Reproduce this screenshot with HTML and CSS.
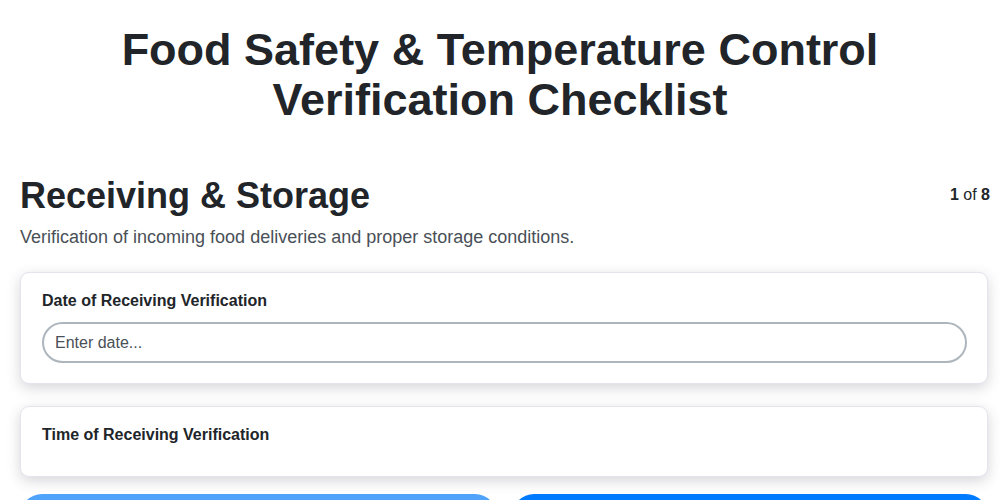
FILE: index.html
```html
<!DOCTYPE html>
<html lang="en">
<head>
<meta charset="utf-8">
<title>Food Safety &amp; Temperature Control Verification Checklist</title>
<link rel="stylesheet" href="styles.css">
</head>
<body>
<div class="page">
  <h1 class="title">Food Safety &amp; Temperature Control Verification Checklist</h1>
  <section class="section">
    <div class="section-head">
      <h2 class="section-title">Receiving &amp; Storage</h2>
      <div class="progress"><b>1</b> of <b>8</b></div>
    </div>
    <p class="section-desc">Verification of incoming food deliveries and proper storage conditions.</p>
    <div class="card">
      <label class="field-label" for="d1">Date of Receiving Verification</label>
      <input class="field-input" id="d1" type="text" placeholder="Enter date...">
    </div>
    <div class="card">
      <label class="field-label">Time of Receiving Verification</label>
    </div>
    <div class="nav">
      <button class="btn btn-prev" disabled>Previous</button>
      <button class="btn btn-next">Next</button>
    </div>
  </section>
</div>
</body>
</html>
```

FILE: styles.css
```css
html, body {
  margin: 0;
  padding: 0;
  background: #ffffff;
}
body {
  font-family: "Liberation Sans", Arial, sans-serif;
  color: #212529;
}
.page {
  padding: 25px 12px 40px 20px;
}
.title {
  margin: 0 -12px 0 -20px;
  text-align: center;
  font-size: 45px;
  line-height: 50px;
  font-weight: 700;
  color: #212529;
}
.section {
  margin-top: 49px;
}
.section-head {
  display: flex;
  align-items: center;
  justify-content: space-between;
}
.section-title {
  margin: 0;
  font-size: 36px;
  line-height: 43px;
  font-weight: 700;
  color: #212529;
}
.progress {
  font-size: 16px;
  color: #212529;
  margin-right: -2px;
  margin-top: -2px;
}
.section-desc {
  margin: 7px 0 21px;
  font-size: 18px;
  line-height: 27px;
  color: #495057;
}
.card {
  background: #ffffff;
  border: 1px solid #e4e4ec;
  border-radius: 9px;
  padding: 20px 20px 20px 21px;
  margin-bottom: 22px;
  box-shadow: 0 4px 14px rgba(50, 50, 70, 0.2);
}
.field-label {
  display: block;
  font-size: 16px;
  line-height: 16px;
  font-weight: 700;
  color: #212529;
  margin-bottom: 13px;
}
.field-input {
  display: block;
  box-sizing: border-box;
  width: 100%;
  height: 41px;
  border: 2px solid #adb5bd;
  border-radius: 21px;
  padding: 0 11px;
  font-family: "Liberation Sans", Arial, sans-serif;
  font-size: 16px;
  color: #212529;
  background: #ffffff;
  outline: none;
}
.field-input::placeholder {
  color: #495057;
}
.nav {
  display: flex;
  gap: 15px;
  margin-top: -5px;
}
.btn {
  flex: 1;
  height: 44px;
  border: none;
  border-radius: 22px;
  color: #ffffff;
  font-family: "Liberation Sans", Arial, sans-serif;
  font-size: 16px;
  font-weight: 700;
}
.btn-prev {
  background: #4fa3fa;
}
.btn-next {
  background: #007bff;
}
```
